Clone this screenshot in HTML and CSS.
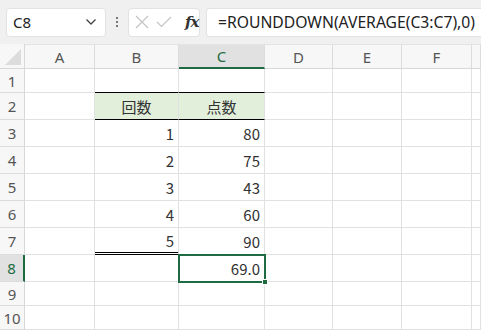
FILE: index.html
```html
<!DOCTYPE html>
<html lang="ja">
<head>
    <meta charset="UTF-8">
    <title>Excel - ROUNDDOWN</title>
    <link rel="stylesheet" href="styles.css">
</head>
<body>
    <div class="toolbar">
        <div class="namebox">
            <span>C8</span>
            <svg class="chevron" width="12" height="8" viewBox="0 0 12 8"><path d="M1.5 1.5 L6 6 L10.5 1.5" fill="none" stroke="#444" stroke-width="1.3"/></svg>
        </div>
        <div class="dots"><i></i><i></i><i></i></div>
        <div class="fxbox">
            <svg width="14" height="14" viewBox="0 0 14 14"><path d="M1 1 L13 13 M13 1 L1 13" stroke="#c4c4c4" stroke-width="1.2"/></svg>
            <svg width="16" height="12" viewBox="0 0 16 12"><path d="M1 6 L5.5 10.5 L15 1" fill="none" stroke="#c4c4c4" stroke-width="1.2"/></svg>
            <span class="fx">fx</span>
        </div>
        <div class="formula">=ROUNDDOWN(AVERAGE(C3:C7),0)</div>
    </div>

    <div class="sheet">
        <div class="corner"><svg width="18" height="18" viewBox="0 0 18 18"><path d="M18 2 L18 18 L2 18 Z" fill="#dcdcdc"/></svg></div>
        <div class="colhead">A</div>
        <div class="colhead">B</div>
        <div class="colhead active">C</div>
        <div class="colhead">D</div>
        <div class="colhead">E</div>
        <div class="colhead">F</div>
        <div class="colhead"></div>

        <div class="rowhead">1</div>
        <div class="cell"></div><div class="cell top-of-table"></div><div class="cell top-of-table"></div><div class="cell"></div><div class="cell"></div><div class="cell"></div><div class="cell"></div>

        <div class="rowhead">2</div>
        <div class="cell"></div><div class="cell title">回数</div><div class="cell title">点数</div><div class="cell"></div><div class="cell"></div><div class="cell"></div><div class="cell"></div>

        <div class="rowhead">3</div>
        <div class="cell"></div><div class="cell num">1</div><div class="cell num">80</div><div class="cell"></div><div class="cell"></div><div class="cell"></div><div class="cell"></div>

        <div class="rowhead">4</div>
        <div class="cell"></div><div class="cell num">2</div><div class="cell num">75</div><div class="cell"></div><div class="cell"></div><div class="cell"></div><div class="cell"></div>

        <div class="rowhead">5</div>
        <div class="cell"></div><div class="cell num">3</div><div class="cell num">43</div><div class="cell"></div><div class="cell"></div><div class="cell"></div><div class="cell"></div>

        <div class="rowhead">6</div>
        <div class="cell"></div><div class="cell num">4</div><div class="cell num">60</div><div class="cell"></div><div class="cell"></div><div class="cell"></div><div class="cell"></div>

        <div class="rowhead">7</div>
        <div class="cell"></div><div class="cell num double">5</div><div class="cell num">90</div><div class="cell"></div><div class="cell"></div><div class="cell"></div><div class="cell"></div>

        <div class="rowhead active">8</div>
        <div class="cell"></div><div class="cell"></div><div class="cell num selected">69.0<span class="handle"></span></div><div class="cell"></div><div class="cell"></div><div class="cell"></div><div class="cell"></div>

        <div class="rowhead">9</div>
        <div class="cell"></div><div class="cell"></div><div class="cell"></div><div class="cell"></div><div class="cell"></div><div class="cell"></div><div class="cell"></div>

        <div class="rowhead">10</div>
        <div class="cell"></div><div class="cell"></div><div class="cell"></div><div class="cell"></div><div class="cell"></div><div class="cell"></div><div class="cell"></div>
    </div>
</body>
</html>
```

FILE: styles.css
```css
* {
    box-sizing: border-box;
}

body {
    margin: 0;
    width: 481px;
    height: 331px;
    overflow: hidden;
    background-color: #ffffff;
    font-family: "Noto Sans CJK JP", "Noto Sans", sans-serif;
    color: #333333;
}

.toolbar {
    height: 44px;
    background-color: #f0f0f0;
    display: flex;
    align-items: center;
    padding: 0 0 0 6px;
}

.namebox {
    width: 100px;
    height: 29px;
    background-color: #ffffff;
    border: 1px solid #e2e2e2;
    border-radius: 4px;
    display: flex;
    align-items: center;
    justify-content: space-between;
    padding: 0 8px 0 6px;
    font-family: "Noto Sans", sans-serif;
    font-size: 15px;
    color: #222;
}

.dots {
    width: 22px;
    display: flex;
    flex-direction: column;
    align-items: center;
    gap: 2px;
}

.dots i {
    width: 2px;
    height: 2px;
    background-color: #777;
}

.fxbox {
    width: 72px;
    height: 29px;
    background-color: #ffffff;
    border: 1px solid #e2e2e2;
    border-radius: 4px;
    display: flex;
    align-items: center;
    gap: 7px;
    padding: 0 0 0 6px;
}

.fx {
    font-family: "DejaVu Serif", serif;
    font-style: italic;
    font-weight: bold;
    font-size: 15px;
    color: #333;
    margin-left: 6px;
    letter-spacing: -1px;
}

.formula {
    flex: 1;
    height: 29px;
    margin-left: 6px;
    background-color: #ffffff;
    border: 1px solid #e2e2e2;
    border-right: none;
    border-radius: 4px 0 0 4px;
    display: flex;
    align-items: center;
    padding-left: 11px;
    font-family: "Noto Sans", sans-serif;
    font-size: 15.7px;
    color: #222;
    white-space: nowrap;
}

.sheet {
    display: grid;
    grid-template-columns: 25px 70px 84px 86px 68px 69px 70px 1fr;
    grid-template-rows: 25px 24px repeat(7, 27px) 24px 24px;
    background-color: #ffffff;
}

.corner {
    background-color: #f7f7f7;
    border-right: 1px solid #d8d8d8;
    border-bottom: 1px solid #d8d8d8;
    display: flex;
    align-items: flex-end;
    justify-content: flex-end;
    padding: 0 3px 3px 0;
}

.colhead {
    background-color: #f7f7f7;
    border-top: 1px solid #e4e4e4;
    border-right: 1px solid #dcdcdc;
    border-bottom: 1px solid #d8d8d8;
    display: flex;
    align-items: center;
    justify-content: center;
    font-family: "Noto Sans", sans-serif;
    font-size: 15px;
    color: #555;
}

.colhead.active {
    background-color: #e1e1e1;
    border-bottom: 2px solid #1e6b41;
    color: #1e6b41;
}

.rowhead {
    background-color: #f7f7f7;
    border-right: 1px solid #d8d8d8;
    border-bottom: 1px solid #dcdcdc;
    display: flex;
    align-items: center;
    justify-content: center;
    font-family: "Noto Sans", sans-serif;
    font-size: 15px;
    color: #555;
}

.rowhead.active {
    background-color: #e1e1e1;
    border-right: 2px solid #1e6b41;
    color: #1e6b41;
}

.cell {
    border-right: 1px solid #e1e1e1;
    border-bottom: 1px solid #e1e1e1;
    display: flex;
    align-items: center;
    padding: 0 4px;
    font-size: 15px;
    white-space: nowrap;
}

.cell.top-of-table {
    border-bottom: 1px solid #000000;
}

.cell.title {
    background-color: #e2efda;
    border-bottom: 1px solid #000000;
    justify-content: center;
}

.cell.num {
    justify-content: flex-end;
}

.cell.double {
    border-bottom: 3px double #000000;
}

.cell.selected {
    position: relative;
    outline: 2px solid #1e6b41;
    outline-offset: -1px;
}

.handle {
    position: absolute;
    right: -4px;
    bottom: -4px;
    width: 6px;
    height: 6px;
    background-color: #1e6b41;
    border: 1px solid #ffffff;
}
```
